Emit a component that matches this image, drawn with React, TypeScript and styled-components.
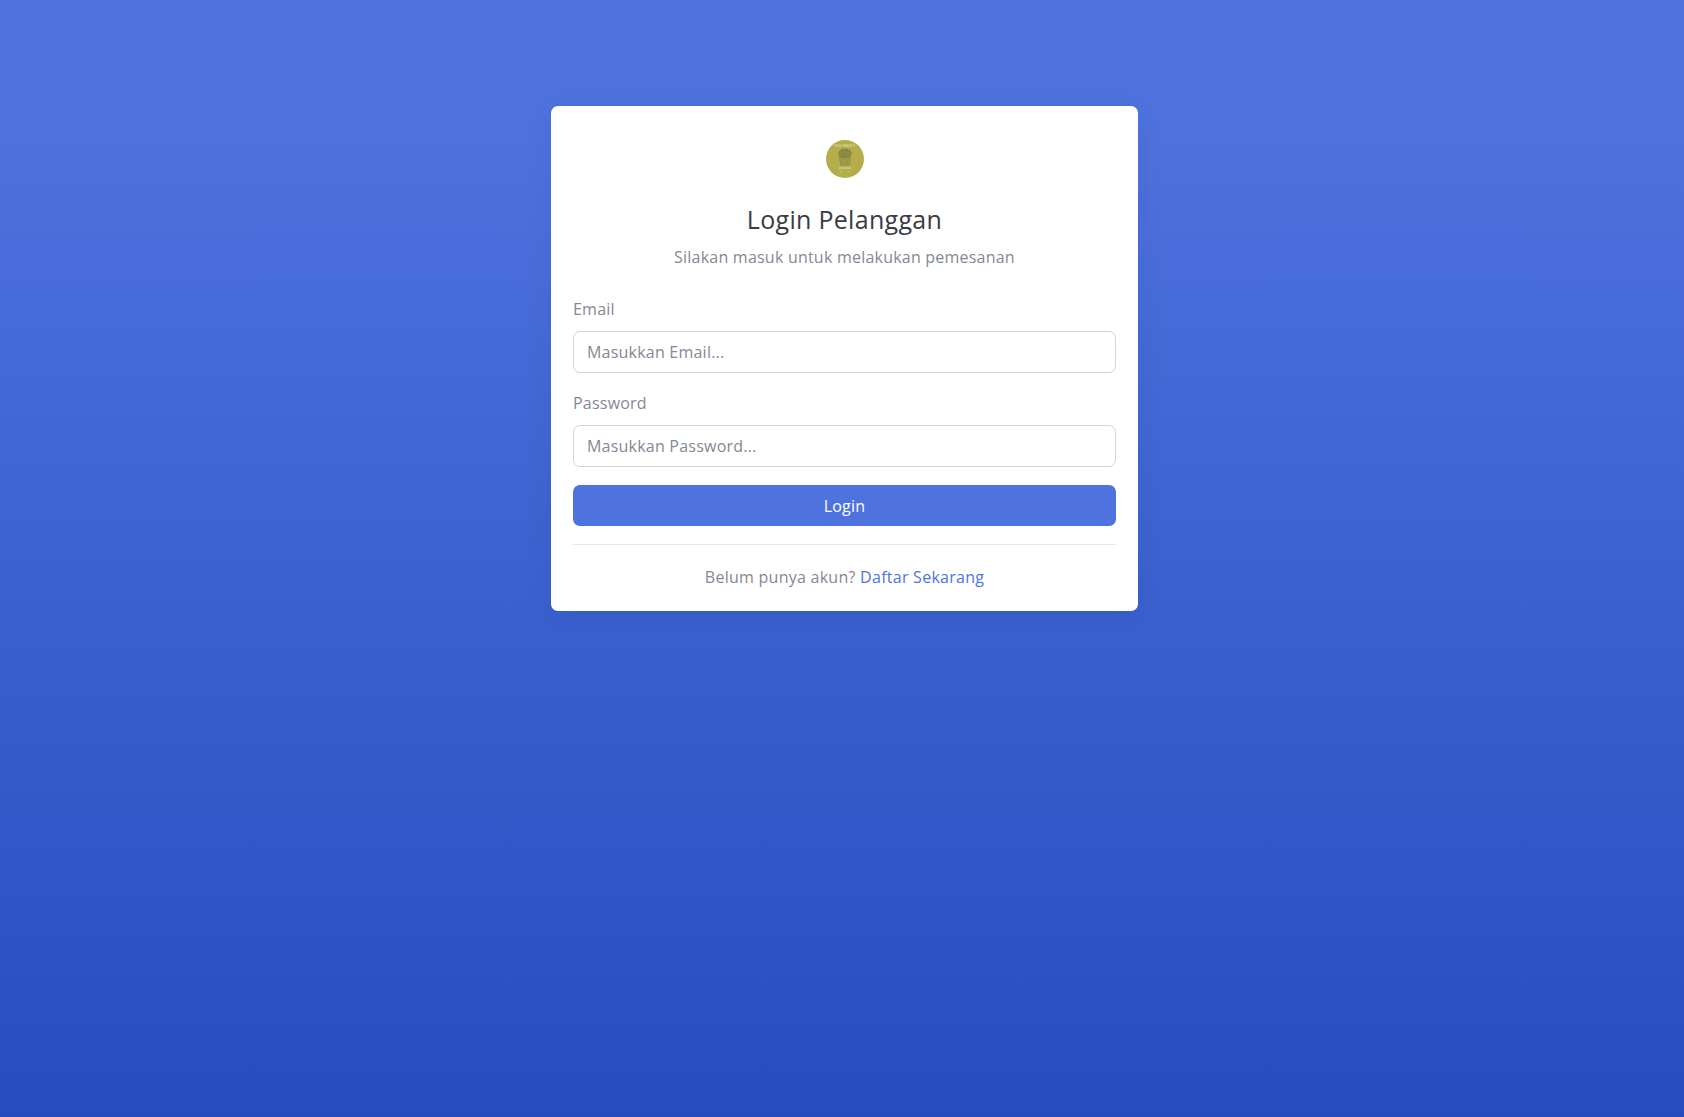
import React from "react";
import styled, { createGlobalStyle } from "styled-components";

const GlobalStyle = createGlobalStyle`
  * { box-sizing: border-box; }
  html, body { margin: 0; height: 100%; }
  body {
    font-family: "Open Sans", "Noto Sans", sans-serif;
    font-size: 16px;
    letter-spacing: 0.22px;
    color: #858796;
  }
`;

const Page = styled.div`
  min-height: 1117px;
  padding: 106px 0 0 5px;
  display: flex;
  justify-content: center;
  align-items: flex-start;
  background: linear-gradient(180deg, #4e73df 10%, #264dbf 100%);
`;

const Card = styled.div`
  width: 587px;
  padding: 34px 22px 22px;
  background: #fff;
  border-radius: 7px;
  box-shadow: 0 2px 24px 0 rgba(58, 59, 69, 0.1);
`;

const Header = styled.div`
  display: flex;
  flex-direction: column;
  align-items: center;
  margin-bottom: 28px;
`;

const Title = styled.h1`
  margin: 23px 0 0;
  font-size: 25px;
  line-height: 36px;
  font-weight: 400;
  letter-spacing: 0.3px;
  color: #3a3b45;
`;

const Subtitle = styled.p`
  margin: 8px 0 0;
  line-height: 24px;
`;

const Field = styled.div`
  margin-bottom: 18px;
`;

const Label = styled.label`
  display: block;
  margin-bottom: 10px;
  line-height: 24px;
`;

const Input = styled.input`
  display: block;
  width: 100%;
  height: 42px;
  padding: 0 13px;
  font: inherit;
  letter-spacing: inherit;
  color: #6e707e;
  background: #fff;
  border: 1px solid #d1d3e2;
  border-radius: 7px;
  outline: none;

  &::placeholder {
    color: #858796;
    opacity: 1;
  }
`;

const SubmitButton = styled.button`
  display: block;
  width: 100%;
  height: 41px;
  padding: 0;
  font: inherit;
  letter-spacing: inherit;
  color: #fff;
  background: #4e73df;
  border: none;
  border-radius: 7px;
`;

const Divider = styled.hr`
  margin: 18px 0 0;
  border: none;
  border-top: 1px solid #e3e6f0;
`;

const Footer = styled.p`
  margin: 20px 0 0;
  line-height: 24px;
  letter-spacing: 0.26px;
  text-align: center;
`;

const RegisterLink = styled.a`
  color: #4e73df;
  text-decoration: none;
`;

const Logo = () => (
  <svg width="38" height="38" viewBox="0 0 38 38" aria-label="Logo">
    <circle cx="19" cy="19" r="19" fill="#b3ae4a" />
    <text x="19" y="6.500" textAnchor="middle" fontSize="3.200" fontFamily="Liberation Sans, sans-serif" fill="#e6e4bb">
      DEV BAKE'S
    </text>
    <ellipse cx="19" cy="13.500" rx="6.800" ry="5" fill="#8a8742" />
    <path d="M15 13h.8M18 10.800h.8M21 12.500h.8M16.500 15h.8M20 15h.8M23 14.800h.8" stroke="#b0ac58" strokeWidth="0.7" />
    <path d="M13.500 17.500h11l-1.200 7.500h-8.600z" fill="#a5a14a" stroke="#7d7a3c" strokeWidth="0.6" />
    <path d="M16 18l.7 6.500M19 18v6.500M22 18l-.7 6.500" stroke="#7d7a3c" strokeWidth="0.5" />
    <path d="M12.500 28h13" stroke="#ecebcc" strokeWidth="0.7" />
    <path d="M13.500 32h3M21.500 32h3" stroke="#d8d69a" strokeWidth="0.5" />
  </svg>
);

export default function App() {
  return (
    <>
      <GlobalStyle />
      <Page>
        <Card>
          <Header>
            <Logo />
            <Title>Login Pelanggan</Title>
            <Subtitle>Silakan masuk untuk melakukan pemesanan</Subtitle>
          </Header>
          <form>
            <Field>
              <Label htmlFor="email">Email</Label>
              <Input id="email" type="email" placeholder="Masukkan Email..." />
            </Field>
            <Field>
              <Label htmlFor="password">Password</Label>
              <Input id="password" type="password" placeholder="Masukkan Password..." />
            </Field>
            <SubmitButton type="submit">Login</SubmitButton>
          </form>
          <Divider />
          <Footer>
            Belum punya akun? <RegisterLink href="#">Daftar Sekarang</RegisterLink>
          </Footer>
        </Card>
      </Page>
    </>
  );
}
